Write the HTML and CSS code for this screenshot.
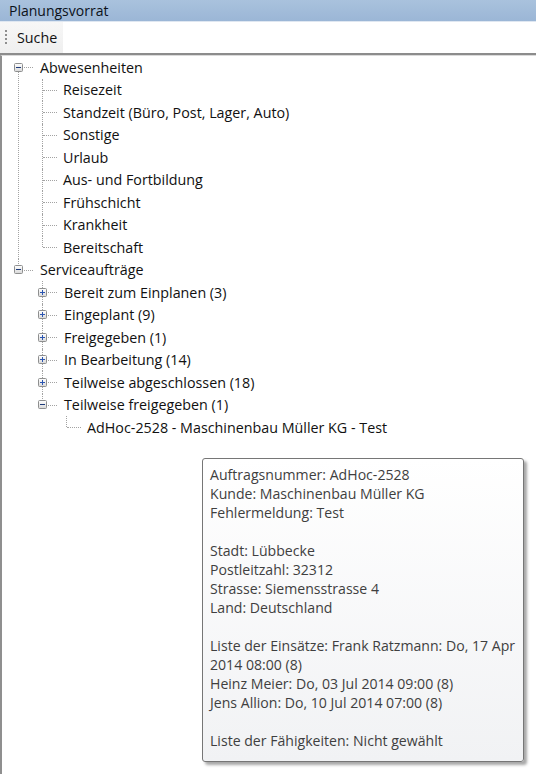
FILE: index.html
```html
<!DOCTYPE html>
<html lang="de">
<head>
<meta charset="utf-8">
<title>Planungsvorrat</title>
<link rel="stylesheet" href="styles.css">
</head>
<body>
<div class="panel">
  <div class="titlebar">Planungsvorrat</div>
  <div class="toolbar">
    <div class="toolstrip">
      <span class="grip"></span>
      <span class="tool-btn">Suche</span>
    </div>
  </div>
  <div class="tree">
    <ul class="roots">
      <li class="first">
        <div class="row"><svg class="exp" width="9" height="9" viewBox="0 0 9 9"><defs><linearGradient id="g1" x1="0" y1="0" x2="0" y2="1"><stop offset="0" stop-color="#ffffff"/><stop offset="1" stop-color="#d8d8d8"/></linearGradient></defs><rect x="0.5" y="0.5" width="8" height="8" rx="1" fill="url(#g1)" stroke="#8e8f8f"/><path d="M2 4.5h5" stroke="#1d3a7a" stroke-width="1"/></svg><span class="label">Abwesenheiten</span></div>
        <ul>
          <li class="leaf"><div class="row"><span class="label">Reisezeit</span></div></li>
          <li class="leaf"><div class="row"><span class="label">Standzeit (Büro, Post, Lager, Auto)</span></div></li>
          <li class="leaf"><div class="row"><span class="label">Sonstige</span></div></li>
          <li class="leaf"><div class="row"><span class="label">Urlaub</span></div></li>
          <li class="leaf"><div class="row"><span class="label">Aus- und Fortbildung</span></div></li>
          <li class="leaf"><div class="row"><span class="label">Frühschicht</span></div></li>
          <li class="leaf"><div class="row"><span class="label">Krankheit</span></div></li>
          <li class="leaf"><div class="row"><span class="label">Bereitschaft</span></div></li>
        </ul>
      </li>
      <li>
        <div class="row"><svg class="exp" width="9" height="9" viewBox="0 0 9 9"><rect x="0.5" y="0.5" width="8" height="8" rx="1" fill="url(#g1)" stroke="#8e8f8f"/><path d="M2 4.5h5" stroke="#1d3a7a" stroke-width="1"/></svg><span class="label">Serviceaufträge</span></div>
        <ul>
          <li><div class="row"><svg class="exp" width="9" height="9" viewBox="0 0 9 9"><rect x="0.5" y="0.5" width="8" height="8" rx="1" fill="url(#g1)" stroke="#8e8f8f"/><path d="M2 4.5h5M4.5 2v5" stroke="#2b55b0" stroke-width="1"/></svg><span class="label">Bereit zum Einplanen (3)</span></div></li>
          <li><div class="row"><svg class="exp" width="9" height="9" viewBox="0 0 9 9"><rect x="0.5" y="0.5" width="8" height="8" rx="1" fill="url(#g1)" stroke="#8e8f8f"/><path d="M2 4.5h5M4.5 2v5" stroke="#2b55b0" stroke-width="1"/></svg><span class="label">Eingeplant (9)</span></div></li>
          <li><div class="row"><svg class="exp" width="9" height="9" viewBox="0 0 9 9"><rect x="0.5" y="0.5" width="8" height="8" rx="1" fill="url(#g1)" stroke="#8e8f8f"/><path d="M2 4.5h5M4.5 2v5" stroke="#2b55b0" stroke-width="1"/></svg><span class="label">Freigegeben (1)</span></div></li>
          <li><div class="row"><svg class="exp" width="9" height="9" viewBox="0 0 9 9"><rect x="0.5" y="0.5" width="8" height="8" rx="1" fill="url(#g1)" stroke="#8e8f8f"/><path d="M2 4.5h5M4.5 2v5" stroke="#2b55b0" stroke-width="1"/></svg><span class="label">In Bearbeitung (14)</span></div></li>
          <li><div class="row"><svg class="exp" width="9" height="9" viewBox="0 0 9 9"><rect x="0.5" y="0.5" width="8" height="8" rx="1" fill="url(#g1)" stroke="#8e8f8f"/><path d="M2 4.5h5M4.5 2v5" stroke="#2b55b0" stroke-width="1"/></svg><span class="label">Teilweise abgeschlossen (18)</span></div></li>
          <li>
            <div class="row"><svg class="exp" width="9" height="9" viewBox="0 0 9 9"><rect x="0.5" y="0.5" width="8" height="8" rx="1" fill="url(#g1)" stroke="#8e8f8f"/><path d="M2 4.5h5" stroke="#1d3a7a" stroke-width="1"/></svg><span class="label">Teilweise freigegeben (1)</span></div>
            <ul>
              <li class="leaf"><div class="row"><span class="label">AdHoc-2528 - Maschinenbau Müller KG - Test</span></div></li>
            </ul>
          </li>
        </ul>
      </li>
    </ul>
  </div>
  <div class="tooltip">
    <p>Auftragsnummer: AdHoc-2528<br>Kunde: Maschinenbau Müller KG<br>Fehlermeldung: Test</p>
    <p>Stadt: Lübbecke<br>Postleitzahl: 32312<br>Strasse: Siemensstrasse 4<br>Land: Deutschland</p>
    <p>Liste der Einsätze: Frank Ratzmann: Do, 17 Apr 2014 08:00 (8)<br>Heinz Meier: Do, 03 Jul 2014 09:00 (8)<br>Jens Allion: Do, 10 Jul 2014 07:00 (8)</p>
    <p>Liste der Fähigkeiten: Nicht gewählt</p>
  </div>
</div>
</body>
</html>
```

FILE: styles.css
```css
html, body {
  margin: 0;
  padding: 0;
  background: #ffffff;
}

body {
  width: 536px;
  height: 774px;
  overflow: hidden;
  font-family: "Open Sans", "Noto Sans", "DejaVu Sans", sans-serif;
  color: #111111;
}

.panel {
  position: relative;
  width: 536px;
  height: 774px;
  display: flex;
  flex-direction: column;
}

.titlebar {
  height: 21px;
  border-bottom: 1px solid #dfe7f1;
  background: linear-gradient(#a9c2dd, #9bb6d6);
  font-size: 14px;
  line-height: 21px;
  padding-left: 9px;
  color: #0c121a;
}

.toolbar {
  height: 31px;
  display: flex;
  background: #ffffff;
  border-bottom: 2px solid #8c8c8c;
}

.toolstrip {
  width: 63px;
  display: flex;
  align-items: center;
  background: linear-gradient(#f7f7f7, #efefef);
}

.grip {
  width: 2px;
  height: 16px;
  margin-left: 5px;
  background: radial-gradient(circle at 1px 1px, #8e8e8e 0.9px, transparent 1px) 0 0 / 2px 4px repeat-y;
}

.tool-btn {
  margin-left: 10px;
  font-size: 14.3px;
  color: #111111;
}

.tree {
  flex: 1;
  border-left: 2px solid #8f8f8f;
  border-top: 1px solid #dadada;
}

.tree ul {
  list-style: none;
  margin: 0;
  padding: 0;
}

.tree ul ul {
  padding-left: 24px;
}

.tree li {
  position: relative;
}

.tree li::before {
  content: "";
  position: absolute;
  left: 16px;
  top: 0;
  bottom: 0;
  border-left: 1px dotted #a3a3a3;
}

.tree li:last-child::before {
  bottom: auto;
  height: 11px;
}

.tree .roots > li.first::before {
  top: 11px;
}

.row {
  position: relative;
  height: 22.5px;
  display: flex;
  align-items: center;
  font-size: 14.3px;
  white-space: nowrap;
}

.row::after {
  content: "";
  position: absolute;
  left: 17px;
  top: 11px;
  width: 14px;
  border-top: 1px dotted #a3a3a3;
}

.exp {
  position: relative;
  z-index: 1;
  margin-left: 12px;
  flex: none;
}

.label {
  margin-left: 17px;
}

.leaf .label {
  margin-left: 37px;
}

.tooltip {
  position: absolute;
  left: 202px;
  top: 458px;
  width: 306px;
  padding: 6px 7px 11px 7px;
  border: 1px solid #767676;
  border-radius: 3px;
  background: linear-gradient(#ffffff, #f1f2f4);
  box-shadow: 3px 3px 3px rgba(0, 0, 0, 0.35);
  color: #3f3f3f;
  font-size: 14.1px;
  line-height: 19px;
}

.tooltip p {
  margin: 0 0 19px 0;
}

.tooltip p:last-child {
  margin-bottom: 0;
}
```
